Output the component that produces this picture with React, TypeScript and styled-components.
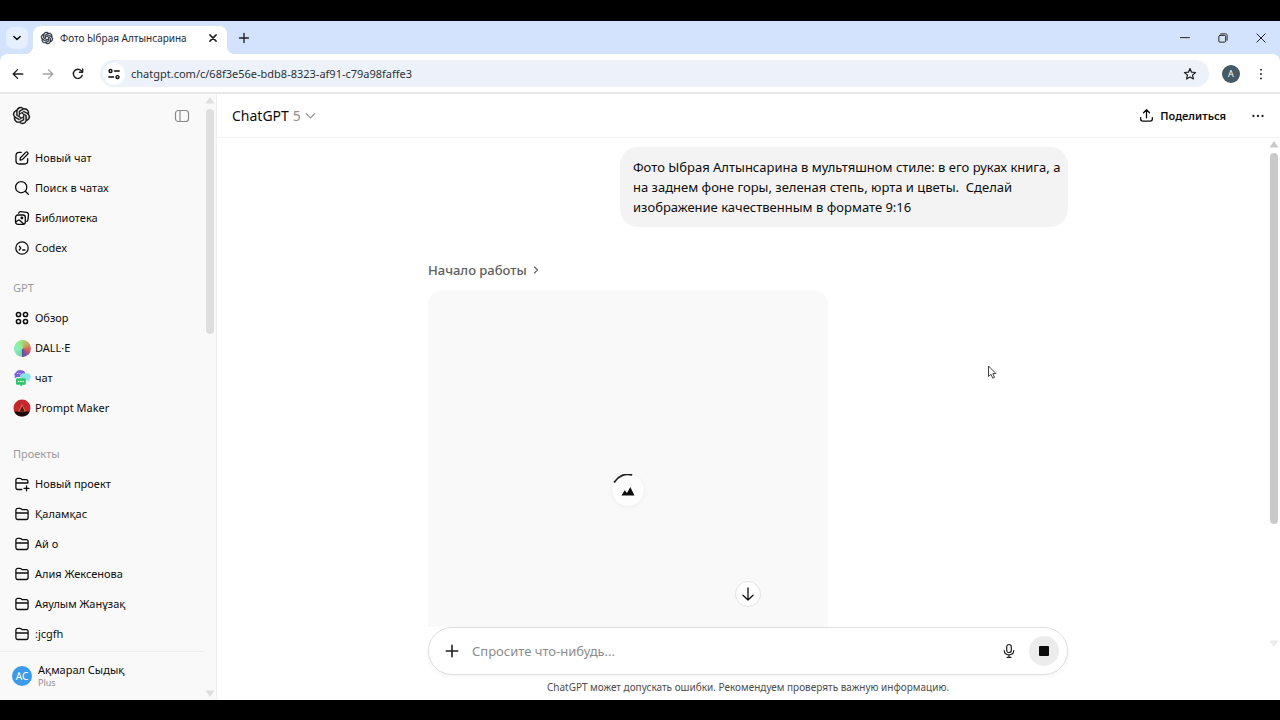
import React from "react";
import styled, { createGlobalStyle } from "styled-components";
import { SiOpenai } from "react-icons/si";

const GlobalStyle = createGlobalStyle`
  *, *::before, *::after { box-sizing: border-box; }
  body {
    margin: 0;
    background: #000;
    color: #0d0d0d;
    font-family: "Noto Sans", "Open Sans", sans-serif;
    font-size: 11px;
    line-height: 20px;
  }
  button, input { font: inherit; color: inherit; }
  button { background: none; border: 0; padding: 0; cursor: pointer; }
  a { color: inherit; text-decoration: none; }
  svg { display: block; flex: none; }
  ul { list-style: none; margin: 0; padding: 0; }
  h1, h2, p { margin: 0; font-weight: 400; font-size: inherit; }
`;

const Screen = styled.div`
  height: 100vh;
  padding: 21px 0 20px;
  display: flex;
  flex-direction: column;
`;

/* ---------- browser chrome ---------- */

const TabStrip = styled.div`
  display: flex;
  align-items: flex-end;
  height: 33px;
  flex: none;
  background: #d3e3fd;
`;

const TabSearch = styled.button`
  display: grid;
  place-items: center;
  width: 22px;
  height: 22px;
  margin: 0 10px 5px 6px;
  border-radius: 8px;
  background: #e6effd;
`;

const Tab = styled.div`
  position: relative;
  display: flex;
  align-items: center;
  gap: 7px;
  width: 194px;
  height: 28px;
  padding: 0 6px 4px 8px;
  margin-left: -5px;
  border-radius: 8px 8px 0 0;
  background: #fff;
  font-size: 10px;
  color: #1f2937;

  &::before,
  &::after {
    content: "";
    position: absolute;
    bottom: 0;
    width: 8px;
    height: 8px;
  }
  &::before {
    right: 100%;
    background: radial-gradient(circle at 0 0, transparent 8px, #fff 8px);
  }
  &::after {
    left: 100%;
    background: radial-gradient(circle at 100% 0, transparent 8px, #fff 8px);
  }
`;

const TabTitle = styled.span`
  flex: 1;
  white-space: nowrap;
  overflow: hidden;
`;

const BrandLogo = styled(SiOpenai)<{ $stroke: number }>`
  stroke: currentColor;
  stroke-width: ${(p) => p.$stroke};
  overflow: visible;
`;

const IconButton = styled.button<{ $size?: number; $color?: string }>`
  display: grid;
  place-items: center;
  flex: none;
  width: ${(p) => p.$size ?? 20}px;
  height: ${(p) => p.$size ?? 20}px;
  color: ${(p) => p.$color ?? "#1f1f1f"};
`;

const NewTab = styled(IconButton)`
  margin: 0 0 6px 7px;
`;

const WindowButtons = styled.div`
  display: flex;
  gap: 18px;
  margin: 0 9px 6px auto;
`;

const Toolbar = styled.div`
  display: flex;
  align-items: center;
  gap: 10px;
  height: 40px;
  flex: none;
  padding: 1px 9px 0 8px;
  background: #d3e3fd;
  border-bottom: 2px solid #e6e8ea;
  position: relative;
  z-index: 0;

  &::before {
    content: "";
    position: absolute;
    inset: 0;
    z-index: -1;
    border-radius: 8px 8px 0 0;
    background: #fff;
  }
`;

const AddressBar = styled.label`
  display: flex;
  align-items: center;
  flex: 1;
  gap: 6px;
  height: 27px;
  margin-left: 2px;
  padding: 0 9px 0 3px;
  border-radius: 14px;
  background: #edf1f9;
`;

const SiteInfo = styled.span`
  display: grid;
  place-items: center;
  width: 22px;
  height: 22px;
  border-radius: 50%;
  background: #fff;
`;

const AddressInput = styled.input`
  flex: 1;
  min-width: 0;
  padding: 0;
  border: 0;
  outline: 0;
  background: none;
  color: #2c3136;
`;

const ProfileButton = styled.button`
  width: 18px;
  height: 18px;
  margin: 0 1px 0 3px;
  border-radius: 50%;
  background: #455a64;
  color: #fff;
  font-size: 9px;
  line-height: 18px;
`;

/* ---------- page layout ---------- */

const Page = styled.div`
  display: flex;
  flex: 1;
  min-height: 0;
  background: #fff;
`;

const Sidebar = styled.aside`
  display: flex;
  flex: none;
  width: 217px;
  background: #f9f9f9;
  border-right: 1px solid #efefef;
`;

const SidebarContent = styled.div`
  display: flex;
  flex-direction: column;
  flex: 1;
  min-width: 0;
`;

const SidebarHeader = styled.div`
  display: flex;
  align-items: center;
  justify-content: space-between;
  height: 43px;
  flex: none;
  padding: 0 13px;
`;

const Nav = styled.nav`
  flex: 1;
  min-height: 0;
  overflow: hidden;
  padding-top: 6px;
`;

const NavSection = styled.section<{ $gap?: number }>`
  margin-top: ${(p) => p.$gap ?? 0}px;
`;

const SectionLabel = styled.h2`
  padding: 0 13px;
  line-height: 30px;
  color: #9b9b9b;
`;

const NavLink = styled.a`
  display: flex;
  align-items: center;
  gap: 4px;
  height: 30px;
  padding: 0 13px;
  white-space: nowrap;
`;

const IconSlot = styled.span`
  display: grid;
  place-items: center;
  width: 18px;
  height: 18px;
`;

const Account = styled.button`
  display: flex;
  align-items: center;
  gap: 6px;
  height: 49px;
  flex: none;
  padding: 0 12px;
  border-top: 1px solid #ececec;
  text-align: left;
`;

const Avatar = styled.span`
  width: 20px;
  height: 20px;
  border-radius: 50%;
  background: #3b9be8;
  color: #fff;
  font-size: 10px;
  line-height: 20px;
  text-align: center;
`;

const AccountText = styled.span`
  display: flex;
  flex-direction: column;
  line-height: 14px;
`;

const Plan = styled.span`
  font-size: 9px;
  line-height: 12px;
  color: #8f8f8f;
`;

const Track = styled.div<{ $bottom?: number }>`
  display: flex;
  flex-direction: column;
  align-items: center;
  flex: none;
  width: 12px;
  gap: 4px;
  padding: 2px 0;
  margin-bottom: ${(p) => p.$bottom ?? 0}px;
`;

const Rail = styled.div`
  flex: 1;
  width: 8px;
`;

const Thumb = styled.div<{ $length: string; $color: string }>`
  height: ${(p) => p.$length};
  border-radius: 4px;
  background: ${(p) => p.$color};
`;

/* ---------- conversation ---------- */

const Main = styled.main`
  display: flex;
  flex-direction: column;
  flex: 1;
  min-width: 0;
`;

const ChatHeader = styled.header`
  display: flex;
  align-items: center;
  height: 44px;
  flex: none;
  padding: 0 12px 0 15px;
  border-bottom: 1px solid #f3f3f3;
`;

const ModelButton = styled.button`
  display: flex;
  align-items: center;
  gap: 4px;
  font-size: 14px;
  color: #8f8f8f;
`;

const ModelName = styled.span`
  color: #0d0d0d;
`;

const ShareButton = styled.button`
  display: flex;
  align-items: center;
  gap: 6px;
  margin: 0 22px 0 auto;
  font-weight: 600;
`;

const ChatBody = styled.div`
  display: flex;
  flex: 1;
  min-height: 0;
`;

const ChatColumn = styled.div`
  display: flex;
  flex-direction: column;
  flex: 1;
  min-width: 0;
  padding-left: 11px;
`;

const Thread = styled.div`
  flex: 1;
  min-height: 0;
  overflow: hidden;
`;

const Messages = styled.div`
  display: flex;
  flex-direction: column;
  width: 100%;
  max-width: 640px;
  margin: 0 auto;
  padding-top: 9px;
`;

const UserMessage = styled.p`
  align-self: flex-end;
  width: 70%;
  padding: 10px 7px 10px 13px;
  border-radius: 18px;
  background: #f3f3f3;
  font-size: 13px;
  white-space: pre-wrap;
`;

const Status = styled.button`
  display: flex;
  align-items: center;
  gap: 5px;
  align-self: flex-start;
  margin: 33px 0 10px;
  font-size: 13px;
  font-weight: 500;
  color: #5d5d5d;
`;

const ImageCard = styled.div`
  display: grid;
  place-items: center;
  width: 400px;
  height: 400px;
  border-radius: 14px;
  background: #f9f9f9;
`;

const Spinner = styled.div`
  display: grid;
  place-items: center;
  width: 32px;
  height: 32px;
  border-radius: 50%;
  background: #fdfdfd;
  box-shadow: 0 1px 4px rgba(0, 0, 0, 0.06);
`;

const Dock = styled.div`
  position: relative;
  width: 100%;
  max-width: 640px;
  flex: none;
  margin: 0 auto;
`;

const ScrollDown = styled.button`
  position: absolute;
  bottom: 100%;
  left: 50%;
  display: grid;
  place-items: center;
  width: 26px;
  height: 26px;
  margin: 0 0 20px -13px;
  border: 1px solid #e4e4e4;
  border-radius: 50%;
  background: #fff;
`;

const Composer = styled.form`
  display: flex;
  align-items: center;
  gap: 10px;
  height: 48px;
  padding: 0 8px 0 13px;
  border: 1px solid #dedede;
  border-radius: 24px;
  background: #fff;
  box-shadow: 0 2px 4px rgba(0, 0, 0, 0.04);
`;

const PromptInput = styled.input`
  flex: 1;
  min-width: 0;
  padding: 0;
  border: 0;
  outline: 0;
  background: none;
  font-size: 13px;

  &::placeholder {
    color: #8c8c8c;
    opacity: 1;
  }
`;

const StopButton = styled(IconButton)`
  border-radius: 50%;
  background: #ececec;
`;

const Disclaimer = styled.p`
  font-size: 10px;
  line-height: 25px;
  text-align: center;
  color: #4d4d4d;
`;

const Pointer = styled.svg`
  position: absolute;
  left: 987px;
  top: 365px;
`;

/* ---------- icons ---------- */

type IconProps = { size?: number; width?: number; box?: number; children: React.ReactNode };

const Icon = ({ size = 16, width = 1.3, box = 16, children }: IconProps) => (
  <svg
    width={size}
    height={size}
    viewBox={`0 0 ${box} ${box}`}
    fill="none"
    stroke="currentColor"
    strokeWidth={width}
    strokeLinecap="round"
    strokeLinejoin="round"
    aria-hidden="true"
  >
    {children}
  </svg>
);

const FolderIcon = () => (
  <Icon>
    <path d="M1.900 5V4.200c0-1.100.8-1.900 1.900-1.900h2c.5 0 .9.200 1.300.5l.6.500c.3.300.7.400 1.100.400h3.400c1.100 0 1.900.8 1.900 1.900v6c0 1.100-.8 1.900-1.900 1.900H3.800c-1.100 0-1.900-.8-1.900-1.900zM1.900 7h12.200" />
  </Icon>
);

const NewFolderIcon = () => (
  <Icon>
    <path d="M7.800 13.500H3.800c-1.100 0-1.900-.8-1.900-1.900V4.200c0-1.100.8-1.900 1.900-1.900h2c.5 0 .9.200 1.300.5l.6.500c.3.300.7.400 1.100.400h3.200c1.100 0 1.900.8 1.900 1.900V7M1.900 7h12M12.500 9.800v5M10 12.300h5" />
  </Icon>
);

const ComposeIcon = () => (
  <Icon>
    <path d="M7.300 2.300H5.200C3.300 2.300 2 3.600 2 5.500v5.300C2 12.700 3.300 14 5.200 14h5.300c1.900 0 3.200-1.300 3.200-3.200V8.600" />
    <path d="M6 10l.4-2.300 5.300-5.300c.6-.6 1.400-.6 1.900 0 .6.600.6 1.300 0 1.900L8.300 9.600z" />
  </Icon>
);

const SearchIcon = () => (
  <Icon>
    <circle cx="7.2" cy="7.2" r="5.6" />
    <path d="M11.300 11.300l3 3" />
  </Icon>
);

const LibraryIcon = () => (
  <Icon width={1.3}>
    <rect x="1.500" y="5" width="9.800" height="9.300" rx="2.400" />
    <path d="M4.600 3.200c.3-1 1.100-1.600 2.200-1.500l5.500.6c1.500.200 2.300 1.200 2.200 2.500l-.6 5c-.1.800-.5 1.300-1.100 1.600" />
    <path d="M1.800 12l2.300-1.800c.5-.4 1-.4 1.500 0l3.800 3.500" />
    <circle cx="7.900" cy="8" r=".8" />
  </Icon>
);

const CodexIcon = () => (
  <Icon>
    <circle cx="8" cy="8" r="6.200" />
    <path d="M5.300 6.200L6.800 8.100 5.300 10M8.700 10h2.200" />
  </Icon>
);

const ExploreIcon = () => (
  <Icon width={1.5}>
    <circle cx="4.500" cy="4.500" r="2.100" />
    <circle cx="11.500" cy="4.500" r="2.100" />
    <circle cx="4.500" cy="11.500" r="2.100" />
    <circle cx="11.500" cy="11.500" r="2.100" />
  </Icon>
);

const DalleIcon = styled.span`
  width: 17px;
  height: 17px;
  border-radius: 50%;
  background: conic-gradient(#a5d86e, #c8a56a 50deg, #d9655c 95deg, #a8508f 140deg, #5b4fa8 180deg, #6fd8a0 182deg, #86eebb 260deg, #8cf0a0 320deg, #a5d86e);
`;

const ChatBubblesIcon = () => (
  <svg width="18" height="18" viewBox="0 0 18 18" aria-hidden="true">
    <path d="M3 3.500C4 1.500 6 .8 8 1.200c3 0 4.200 1.500 4.200 3.300S10.500 8 8 8H4L1.500 9.200 2 7C.8 5.800 1.200 4 3 3.500z" fill="#7b63dc" />
    <path d="M10 4.200h4c2.500 0 3.700 1.400 3.700 3.300 0 1.500-.6 2.400-1.600 3L16.500 13l-2.500-1.800h-4c-2-.3-3-1.800-3-3.500s1.200-3.200 3-3.500z" fill="#8be3ea" />
    <path d="M4.500 9.200h6.800c1 0 1.500.5 1.500 1.500v3.600c0 1-.5 1.500-1.500 1.500H9.500L8 17.500l-1-1.700H4.500c-1 0-1.500-.5-1.500-1.500v-3.600c0-1 .5-1.500 1.500-1.500z" fill="#2fc46c" />
    <g fill="#fff">
      <circle cx="5.700" cy="12.500" r=".8" />
      <circle cx="8" cy="12.500" r=".8" />
      <circle cx="10.300" cy="12.500" r=".8" />
      <circle cx="4.800" cy="4.500" r=".6" />
      <circle cx="7" cy="4.500" r=".6" />
    </g>
  </svg>
);

const PromptMakerIcon = () => (
  <svg width="18" height="18" viewBox="0 0 18 18" aria-hidden="true">
    <circle cx="9" cy="9" r="8.500" fill="#c2272d" />
    <path d="M1.200 12.500h15.600A8.500 8.500 0 0 1 1.200 12.500z" fill="#1a0c0c" />
    <path d="M9 4.500l1.300 3 2.700 5H5l2.500-4.500z" fill="#e2643a" />
    <path d="M9.200 7l2.300 5.500H6.700z" fill="#4a1512" />
  </svg>
);

const Arrow = ({ down = false, color }: { down?: boolean; color: string }) => (
  <svg width="10" height="9" viewBox="0 0 10 9" aria-hidden="true">
    <path d={down ? "M.5 1.500h9L5 8z" : "M.5 7.500h9L5 1z"} fill={color} />
  </svg>
);

/* ---------- data ---------- */

type Entry = { label: string; icon: React.ReactNode };

const primary: Entry[] = [
  { label: "Новый чат", icon: <ComposeIcon /> },
  { label: "Поиск в чатах", icon: <SearchIcon /> },
  { label: "Библиотека", icon: <LibraryIcon /> },
  { label: "Codex", icon: <CodexIcon /> },
];

const gpts: Entry[] = [
  { label: "Обзор", icon: <ExploreIcon /> },
  { label: "DALL·E", icon: <DalleIcon /> },
  { label: "чат", icon: <ChatBubblesIcon /> },
  { label: "Prompt Maker", icon: <PromptMakerIcon /> },
];

const projects: Entry[] = [
  { label: "Новый проект", icon: <NewFolderIcon /> },
  ...["Қаламқас", "Ай о", "Алия Жексенова", "Аяулым Жанұзақ", ":jcgfh"].map((label) => ({
    label,
    icon: <FolderIcon />,
  })),
];

const NavList = ({ entries }: { entries: Entry[] }) => (
  <ul>
    {entries.map((entry) => (
      <li key={entry.label}>
        <NavLink href="#">
          <IconSlot>{entry.icon}</IconSlot>
          {entry.label}
        </NavLink>
      </li>
    ))}
  </ul>
);

const ScrollBar = ({
  length,
  color,
  end,
  bottom,
}: {
  length: string;
  color: string;
  end: string;
  bottom?: number;
}) => (
  <Track $bottom={bottom} aria-hidden="true">
    <Arrow color={color} />
    <Rail>
      <Thumb $length={length} $color={color} />
    </Rail>
    <Arrow down color={end} />
  </Track>
);

const BrowserChrome = () => (
  <>
    <TabStrip>
      <TabSearch aria-label="Поиск вкладок">
        <Icon size={10} width={2.4}>
          <path d="M3 5.500l5 5 5-5" />
        </Icon>
      </TabSearch>
      <Tab>
        <BrandLogo size={12} $stroke={0.9} />
        <TabTitle>Фото Ыбрая Алтынсарина</TabTitle>
        <IconButton $size={16} aria-label="Закрыть вкладку">
          <Icon size={10} width={2.4}>
            <path d="M3 3l10 10M13 3L3 13" />
          </Icon>
        </IconButton>
      </Tab>
      <NewTab aria-label="Новая вкладка">
        <Icon size={12} width={1.800}>
          <path d="M8 2v12M2 8h12" />
        </Icon>
      </NewTab>
      <WindowButtons>
        <IconButton aria-label="Свернуть">
          <Icon size={12}>
            <path d="M2 7.500h12" />
          </Icon>
        </IconButton>
        <IconButton aria-label="Восстановить">
          <Icon size={12}>
            <rect x="2.500" y="4.500" width="9" height="9" rx="1.500" />
            <path d="M5 2.500h6.500c1.300 0 2 .7 2 2V11" />
          </Icon>
        </IconButton>
        <IconButton aria-label="Закрыть">
          <Icon size={12}>
            <path d="M2.500 2.500l11 11M13.500 2.500l-11 11" />
          </Icon>
        </IconButton>
      </WindowButtons>
    </TabStrip>
    <Toolbar>
      <IconButton aria-label="Назад">
        <Icon size={14} width={1.500}>
          <path d="M13.500 8H3M7.500 3L2.500 8l5 5" />
        </Icon>
      </IconButton>
      <IconButton $color="#a5a5a5" aria-label="Вперёд">
        <Icon size={14} width={1.500}>
          <path d="M2.500 8H13M8.500 3l5 5-5 5" />
        </Icon>
      </IconButton>
      <IconButton aria-label="Обновить">
        <Icon size={14} width={1.600}>
          <path d="M12.800 9.500A5.200 5.200 0 1 1 11.800 4.400L13.300 6M13.300 2.300V6H9.600" />
        </Icon>
      </IconButton>
      <AddressBar>
        <SiteInfo>
          <Icon size={14} width={1.600}>
            <circle cx="4" cy="4.500" r="1.700" />
            <path d="M8.500 4.500H14M2 11.500h5.500" />
            <circle cx="12" cy="11.500" r="1.700" />
          </Icon>
        </SiteInfo>
        <AddressInput
          aria-label="Адрес"
          defaultValue="chatgpt.com/c/68f3e56e-bdb8-8323-af91-c79a98faffe3"
        />
        <IconButton aria-label="Добавить в закладки">
          <Icon size={14} width={1.400}>
            <path d="M8 1.800l1.800 4.100 4.500.4-3.400 3 1 4.400L8 11.400l-3.900 2.300 1-4.400-3.400-3 4.500-.4z" />
          </Icon>
        </IconButton>
      </AddressBar>
      <ProfileButton>A</ProfileButton>
      <IconButton aria-label="Меню">
        <Icon size={14} width={2.200}>
          <path d="M8 3v0M8 8v0M8 13v0" />
        </Icon>
      </IconButton>
    </Toolbar>
  </>
);

export default function App() {
  return (
    <Screen>
      <GlobalStyle />
      <BrowserChrome />
      <Page>
        <Sidebar>
          <SidebarContent>
            <SidebarHeader>
              <BrandLogo size={17} $stroke={0.5} />
              <IconButton $size={18} $color="#8a8a8a" aria-label="Закрыть боковую панель">
                <Icon width={1.200}>
                  <rect x="1.500" y="2.500" width="13" height="11" rx="2.800" />
                  <path d="M6 2.500v11" />
                </Icon>
              </IconButton>
            </SidebarHeader>
            <Nav>
              <NavSection>
                <NavList entries={primary} />
              </NavSection>
              <NavSection $gap={10}>
                <SectionLabel>GPT</SectionLabel>
                <NavList entries={gpts} />
              </NavSection>
              <NavSection $gap={16}>
                <SectionLabel>Проекты</SectionLabel>
                <NavList entries={projects} />
              </NavSection>
            </Nav>
            <Account>
              <Avatar>АС</Avatar>
              <AccountText>
                Ақмарал Сыдық
                <Plan>Plus</Plan>
              </AccountText>
            </Account>
          </SidebarContent>
          <ScrollBar length="39%" color="#dedede" end="#dedede" />
        </Sidebar>
        <Main>
          <ChatHeader>
            <ModelButton>
              <ModelName>ChatGPT</ModelName> 5
              <Icon size={11} width={1.700}>
                <path d="M2 5.500l6 6 6-6" />
              </Icon>
            </ModelButton>
            <ShareButton>
              <Icon size={15} width={1.400}>
                <path d="M8 10.500V2M4.800 5L8 1.800 11.200 5M1.800 10.200v1.500c0 1.400.8 2.200 2.200 2.200h8c1.400 0 2.200-.8 2.200-2.200v-1.500" />
              </Icon>
              Поделиться
            </ShareButton>
            <IconButton aria-label="Ещё">
              <Icon size={14} width={2.600}>
                <path d="M2.800 8v0M8 8v0M13.200 8v0" />
              </Icon>
            </IconButton>
          </ChatHeader>
          <ChatBody>
            <ChatColumn>
              <Thread>
                <Messages>
                  <UserMessage>
                    {"Фото Ыбрая Алтынсарина в мультяшном стиле: в его руках книга, а на заднем фоне горы, зеленая степь, юрта и цветы.  Сделай изображение качественным в формате 9:16"}
                  </UserMessage>
                  <Status>
                    Начало работы
                    <Icon size={8} width={2.200}>
                      <path d="M5 2l6 6-6 6" />
                    </Icon>
                  </Status>
                  <ImageCard>
                    <Spinner>
                      <svg width="32" height="32" viewBox="0 0 32 32" aria-hidden="true">
                        <path d="M2.500 8A15.500 15.500 0 0 1 19.500 .9" fill="none" stroke="#222" strokeWidth="1.700" strokeLinecap="round" />
                        <path d="M9.500 21.500l3.200-5.300 2.300 2.800 3.300-6 4.200 8.500z" fill="#0d0d0d" />
                      </svg>
                    </Spinner>
                  </ImageCard>
                </Messages>
              </Thread>
              <Dock>
                <ScrollDown aria-label="Прокрутить вниз">
                  <Icon>
                    <path d="M8 2v12M3 9.200L8 14l5-4.800" />
                  </Icon>
                </ScrollDown>
                <Composer>
                  <IconButton type="button" aria-label="Добавить">
                    <Icon width={1.600}>
                      <path d="M8 2.300v11.400M2.300 8h11.400" />
                    </Icon>
                  </IconButton>
                  <PromptInput aria-label="Сообщение" placeholder="Спросите что-нибудь..." />
                  <IconButton type="button" aria-label="Диктовка">
                    <Icon width={1.200}>
                      <rect x="5.700" y="1.500" width="4.600" height="8" rx="2.300" />
                      <path d="M3.200 7.500c.2 2.700 2 4.300 4.800 4.300s4.600-1.600 4.800-4.300M8 11.800v2.400M6 14.300h4" />
                    </Icon>
                  </IconButton>
                  <StopButton type="button" $size={30} aria-label="Остановить">
                    <svg width="10" height="10" viewBox="0 0 10 10" aria-hidden="true">
                      <rect width="10" height="10" rx="1" fill="#0d0d0d" />
                    </svg>
                  </StopButton>
                </Composer>
                <Disclaimer>
                  ChatGPT может допускать ошибки. Рекомендуем проверять важную информацию.
                </Disclaimer>
              </Dock>
            </ChatColumn>
            <ScrollBar length="77%" color="#c9c9c9" end="#ececec" bottom={50} />
          </ChatBody>
        </Main>
      </Page>
      <Pointer width="11" height="15" viewBox="0 0 11 15" aria-hidden="true">
        <path d="M1.500 1v10.500l2.500-2.200 1.700 3.900 1.800-.8-1.700-3.800H9z" fill="#fff" stroke="#444" strokeWidth="1" strokeLinejoin="round" />
      </Pointer>
    </Screen>
  );
}
